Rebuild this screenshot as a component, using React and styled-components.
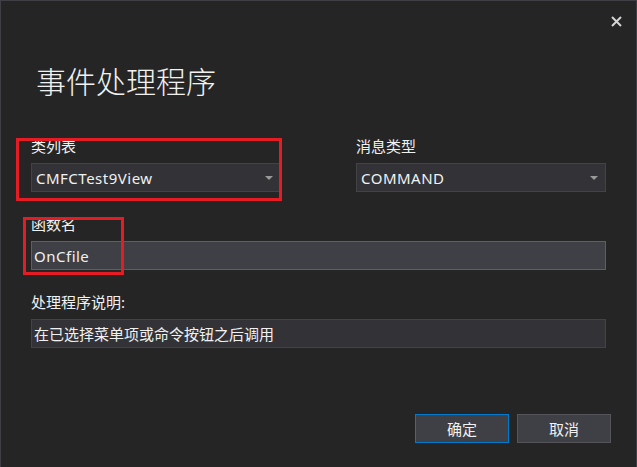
import React from 'react';
import styled, { createGlobalStyle } from 'styled-components';

const GlobalStyle = createGlobalStyle`
  html, body {
    margin: 0;
    padding: 0;
    background: #252526;
  }
  * {
    box-sizing: border-box;
  }
`;

const font = `"Noto Sans", "Noto Sans CJK SC", sans-serif`;

const Dialog = styled.div`
  width: 637px;
  height: 467px;
  background: #252526;
  border: 1px solid #3f3f46;
  border-bottom: none;
  display: flex;
  flex-direction: column;
  padding: 0 0 24px 30px;
  font-family: ${font};
  color: #f1f1f1;
  overflow: hidden;
`;

const TopBar = styled.div`
  height: 40px;
  display: flex;
  justify-content: flex-end;
  align-items: center;
  padding-right: 10px;
`;

const CloseButton = styled.button`
  width: 20px;
  height: 20px;
  padding: 0;
  border: none;
  background: transparent;
  display: flex;
  align-items: center;
  justify-content: center;
  cursor: pointer;
`;

const Title = styled.h1`
  margin: 19px 0 0 5px;
  font-family: "Noto Sans CJK SC", sans-serif;
  font-weight: 300;
  font-size: 30px;
  line-height: 40px;
  color: #f1f1f1;
`;

const Form = styled.div`
  margin-top: 36px;
  display: flex;
  flex-direction: column;
  gap: 22px;
`;

const Row = styled.div`
  display: grid;
  grid-template-columns: 250px 250px;
  column-gap: 75px;
`;

const Field = styled.div`
  position: relative;
  display: flex;
  flex-direction: column;
  gap: 7px;
  width: ${(p) => p.$width || 250}px;
`;

const Label = styled.label`
  font-size: 15px;
  line-height: 20px;
  height: 20px;
  color: #f1f1f1;
`;

const Combo = styled.div`
  height: 29px;
  background: #333337;
  border: 1px solid #434346;
  display: flex;
  align-items: center;
  justify-content: space-between;
  padding: 0 7px 0 4px;
  font-size: 15px;
  letter-spacing: 0.5px;
`;

const Arrow = styled.span`
  width: 0;
  height: 0;
  border-left: 4px solid transparent;
  border-right: 4px solid transparent;
  border-top: 4px solid #999999;
`;

const TextBox = styled.div`
  height: 29px;
  background: ${(p) => (p.$focused ? '#3f3f46' : '#333337')};
  border: 1px solid ${(p) => (p.$focused ? '#007acc' : '#434346')};
  display: flex;
  align-items: center;
  padding-left: 2px;
  font-size: 15px;
  letter-spacing: ${(p) => (p.$spaced ? '0.5px' : '0')};
`;

const Highlight = styled.div`
  position: absolute;
  left: ${(p) => p.$left}px;
  top: ${(p) => p.$top}px;
  width: ${(p) => p.$w}px;
  height: ${(p) => p.$h}px;
  border: 3px solid #e51c23;
  pointer-events: none;
`;

const Footer = styled.div`
  margin-top: auto;
  display: flex;
  justify-content: flex-end;
  gap: 8px;
  padding-right: 25px;
`;

const Button = styled.button`
  width: 94px;
  height: 29px;
  background: #3f3f46;
  border: 1px solid ${(p) => (p.$primary ? '#007acc' : '#555559')};
  color: #f1f1f1;
  font-family: ${font};
  font-size: 15px;
  padding: 0;
  cursor: pointer;
`;

const CloseIcon = () => (
  <svg width="11" height="11" viewBox="0 0 11 11">
    <path d="M1 1 L10 10 M10 1 L1 10" stroke="#d4d4d4" strokeWidth="2" />
  </svg>
);

export default function App() {
  return (
    <>
      <GlobalStyle />
      <Dialog>
        <TopBar>
          <CloseButton aria-label="close">
            <CloseIcon />
          </CloseButton>
        </TopBar>
        <Title>事件处理程序</Title>
        <Form>
          <Row>
            <Field>
              <Label>类列表</Label>
              <Combo>
                <span>CMFCTest9View</span>
                <Arrow />
              </Combo>
              <Highlight $left={-15} $top={2} $w={266} $h={63} />
            </Field>
            <Field>
              <Label>消息类型</Label>
              <Combo>
                <span>COMMAND</span>
                <Arrow />
              </Combo>
            </Field>
          </Row>
          <Field $width={575}>
            <Label>函数名</Label>
            <TextBox $focused $spaced>OnCfile</TextBox>
            <Highlight $left={-8} $top={3} $w={101} $h={58} />
          </Field>
          <Field $width={575}>
            <Label>处理程序说明:</Label>
            <TextBox>在已选择菜单项或命令按钮之后调用</TextBox>
          </Field>
        </Form>
        <Footer>
          <Button $primary>确定</Button>
          <Button>取消</Button>
        </Footer>
      </Dialog>
    </>
  );
}
